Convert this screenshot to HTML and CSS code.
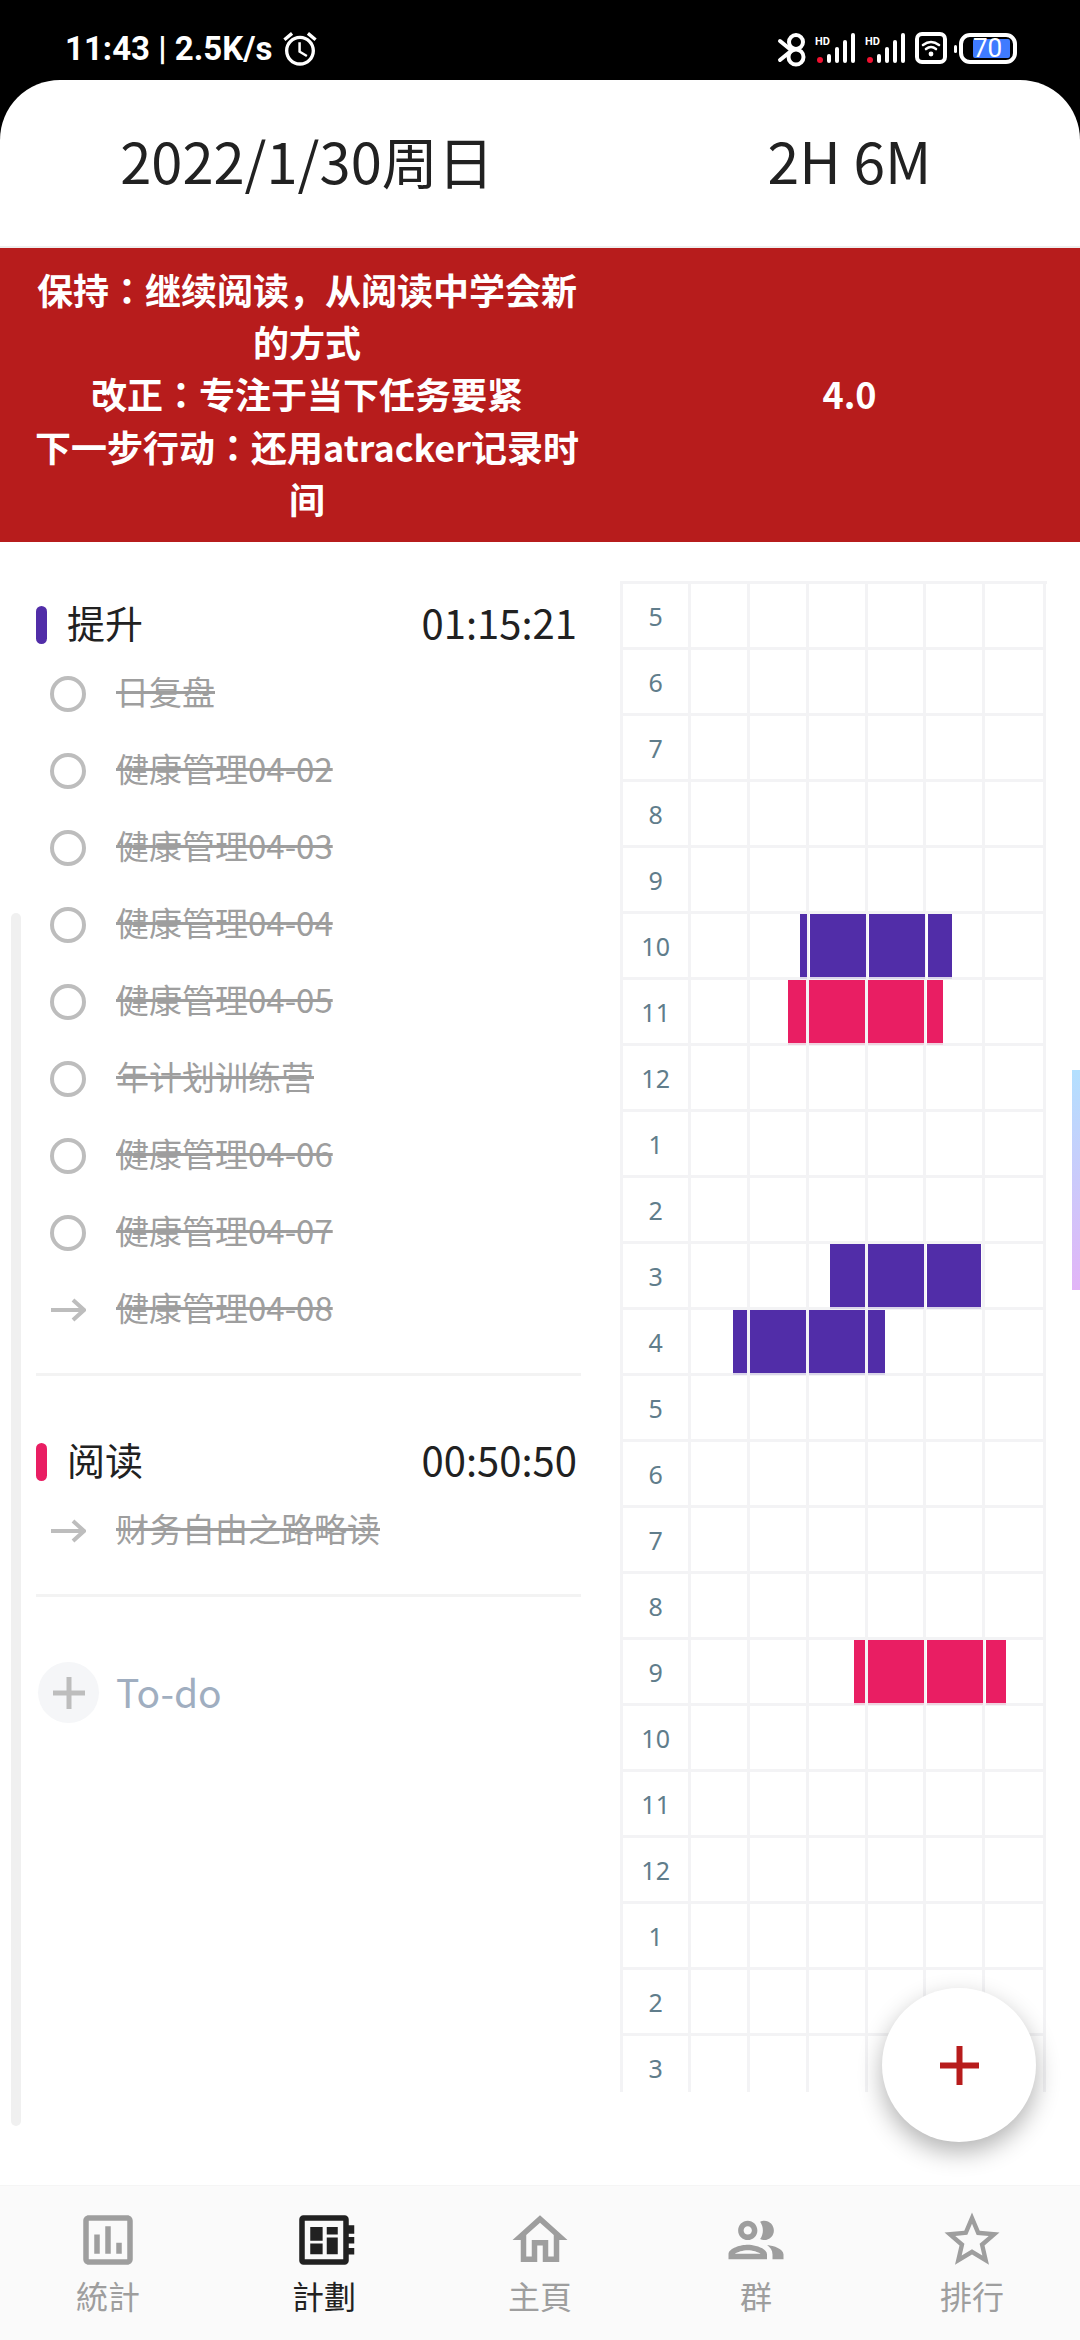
FILE: index.html
```html
<!DOCTYPE html>
<html>
<head>
<meta charset="utf-8">
<title>計劃</title>
<link rel="stylesheet" href="styles.css">
</head>
<body>
<div class="phone">
  <div class="status">
    <div class="status-left">
      <span class="clock">11:43 | 2.5K/s</span>
      <svg class="alarm" viewBox="0 0 24 24"><path d="M22 5.72l-4.6-3.86-1.29 1.53 4.6 3.86L22 5.72zM7.88 3.39L6.6 1.86 2 5.71l1.29 1.53 4.59-3.85zM12.5 8H11v6l4.75 2.85.75-1.23-4-2.37V8zM12 4c-4.97 0-9 4.03-9 9s4.03 9 9 9 9-4.03 9-9-4.03-9-9-9zm0 16c-3.87 0-7-3.13-7-7s3.13-7 7-7 7 3.13 7 7-3.13 7-7 7z"/></svg>
    </div>
    <svg class="status-right" viewBox="0 0 250 40" width="250" height="40">
      <g fill="none" stroke="#fff" stroke-width="4" stroke-linecap="round">
        <path d="M0 8 L11 17 M0 27 L11 18"/>
        <circle cx="16" cy="9" r="7"/>
        <circle cx="16" cy="24" r="7.5"/>
      </g>
      <g class="sig">
        <text class="hd" x="35" y="12">HD</text>
        <circle class="dot" cx="40" cy="27" r="3"/>
        <rect x="47" y="21" width="4" height="9" rx="2"/>
        <rect x="55" y="14" width="4" height="16" rx="2"/>
        <rect x="63" y="7" width="4" height="23" rx="2"/>
        <rect x="71" y="0" width="4" height="30" rx="2"/>
      </g>
      <g class="sig">
        <text class="hd" x="85" y="12">HD</text>
        <circle class="dot" cx="90" cy="27" r="3"/>
        <rect x="97" y="21" width="4" height="9" rx="2"/>
        <rect x="105" y="14" width="4" height="16" rx="2"/>
        <rect x="113" y="7" width="4" height="23" rx="2"/>
        <rect x="121" y="0" width="4" height="30" rx="2"/>
      </g>
      <rect x="137" y="1" width="28" height="28" rx="5" fill="none" stroke="#fff" stroke-width="4"/>
      <path d="M143 12 Q151 6 159 12 M146 16 Q151 12 156 16" fill="none" stroke="#fff" stroke-width="2.6" stroke-linecap="round"/>
      <circle cx="151" cy="21" r="2.4" fill="#fff"/>
      <rect x="174" y="12" width="3" height="8" rx="1.5" fill="#fff"/>
      <rect x="181" y="2" width="54" height="27" rx="9" fill="none" stroke="#fff" stroke-width="4"/>
      <rect x="193" y="6" width="37" height="19" rx="2" fill="#3f7bff"/>
      <text class="batt" x="193" y="24">70</text>
    </svg>
  </div>

  <div class="panel">
    <header class="head">
      <div class="col-left">2022/1/30周日</div>
      <div class="col-right">2H 6M</div>
    </header>

    <section class="banner" lang="ja">
      <div class="col-left">保持：继续阅读，从阅读中学会新的方式<br>改正：专注于当下任务要紧<br>下一步行动：还用atracker记录时间</div>
      <div class="col-right">4.0</div>
    </section>

    <main class="main">
      <div class="todos">
        <section class="group">
          <div class="group-head">
            <span class="mark mark-purple"></span>
            <span class="group-title">提升</span>
            <span class="group-time">01:15:21</span>
          </div>
          <div class="task"><span class="ring"></span><span class="task-name">日复盘</span></div>
          <div class="task"><span class="ring"></span><span class="task-name">健康管理04-02</span></div>
          <div class="task"><span class="ring"></span><span class="task-name">健康管理04-03</span></div>
          <div class="task"><span class="ring"></span><span class="task-name">健康管理04-04</span></div>
          <div class="task"><span class="ring"></span><span class="task-name">健康管理04-05</span></div>
          <div class="task"><span class="ring"></span><span class="task-name">年计划训练营</span></div>
          <div class="task"><span class="ring"></span><span class="task-name">健康管理04-06</span></div>
          <div class="task"><span class="ring"></span><span class="task-name">健康管理04-07</span></div>
          <div class="task"><svg class="arrow" viewBox="0 0 36 24"><path d="M1 12 H34 M23 2 L34 12 L23 22"/></svg><span class="task-name">健康管理04-08</span></div>
        </section>
        <section class="group">
          <div class="group-head">
            <span class="mark mark-pink"></span>
            <span class="group-title">阅读</span>
            <span class="group-time">00:50:50</span>
          </div>
          <div class="task"><svg class="arrow" viewBox="0 0 36 24"><path d="M1 12 H34 M23 2 L34 12 L23 22"/></svg><span class="task-name">财务自由之路略读</span></div>
        </section>
        <div class="add">
          <span class="add-btn"><svg viewBox="0 0 32 32"><path d="M16 0 V32 M0 16 H32"/></svg></span>
          <span class="add-label">To-do</span>
        </div>
      </div>

      <div class="grid">
        <div class="cell hour">5</div><i class="cell"></i><i class="cell"></i><i class="cell"></i><i class="cell"></i><i class="cell"></i><i class="cell"></i>
        <div class="cell hour">6</div><i class="cell"></i><i class="cell"></i><i class="cell"></i><i class="cell"></i><i class="cell"></i><i class="cell"></i>
        <div class="cell hour">7</div><i class="cell"></i><i class="cell"></i><i class="cell"></i><i class="cell"></i><i class="cell"></i><i class="cell"></i>
        <div class="cell hour">8</div><i class="cell"></i><i class="cell"></i><i class="cell"></i><i class="cell"></i><i class="cell"></i><i class="cell"></i>
        <div class="cell hour">9</div><i class="cell"></i><i class="cell"></i><i class="cell"></i><i class="cell"></i><i class="cell"></i><i class="cell"></i>
        <div class="cell hour">10</div><i class="cell"></i><i class="cell"></i><i class="cell"></i><i class="cell"></i><i class="cell"></i><i class="cell"></i>
        <div class="cell hour">11</div><i class="cell"></i><i class="cell"></i><i class="cell"></i><i class="cell"></i><i class="cell"></i><i class="cell"></i>
        <div class="cell hour">12</div><i class="cell"></i><i class="cell"></i><i class="cell"></i><i class="cell"></i><i class="cell"></i><i class="cell"></i>
        <div class="cell hour">1</div><i class="cell"></i><i class="cell"></i><i class="cell"></i><i class="cell"></i><i class="cell"></i><i class="cell"></i>
        <div class="cell hour">2</div><i class="cell"></i><i class="cell"></i><i class="cell"></i><i class="cell"></i><i class="cell"></i><i class="cell"></i>
        <div class="cell hour">3</div><i class="cell"></i><i class="cell"></i><i class="cell"></i><i class="cell"></i><i class="cell"></i><i class="cell"></i>
        <div class="cell hour">4</div><i class="cell"></i><i class="cell"></i><i class="cell"></i><i class="cell"></i><i class="cell"></i><i class="cell"></i>
        <div class="cell hour">5</div><i class="cell"></i><i class="cell"></i><i class="cell"></i><i class="cell"></i><i class="cell"></i><i class="cell"></i>
        <div class="cell hour">6</div><i class="cell"></i><i class="cell"></i><i class="cell"></i><i class="cell"></i><i class="cell"></i><i class="cell"></i>
        <div class="cell hour">7</div><i class="cell"></i><i class="cell"></i><i class="cell"></i><i class="cell"></i><i class="cell"></i><i class="cell"></i>
        <div class="cell hour">8</div><i class="cell"></i><i class="cell"></i><i class="cell"></i><i class="cell"></i><i class="cell"></i><i class="cell"></i>
        <div class="cell hour">9</div><i class="cell"></i><i class="cell"></i><i class="cell"></i><i class="cell"></i><i class="cell"></i><i class="cell"></i>
        <div class="cell hour">10</div><i class="cell"></i><i class="cell"></i><i class="cell"></i><i class="cell"></i><i class="cell"></i><i class="cell"></i>
        <div class="cell hour">11</div><i class="cell"></i><i class="cell"></i><i class="cell"></i><i class="cell"></i><i class="cell"></i><i class="cell"></i>
        <div class="cell hour">12</div><i class="cell"></i><i class="cell"></i><i class="cell"></i><i class="cell"></i><i class="cell"></i><i class="cell"></i>
        <div class="cell hour">1</div><i class="cell"></i><i class="cell"></i><i class="cell"></i><i class="cell"></i><i class="cell"></i><i class="cell"></i>
        <div class="cell hour">2</div><i class="cell"></i><i class="cell"></i><i class="cell"></i><i class="cell"></i><i class="cell"></i><i class="cell"></i>
        <div class="cell hour">3</div><i class="cell"></i><i class="cell"></i><i class="cell"></i><i class="cell"></i><i class="cell"></i><i class="cell"></i>

        <div class="event event-purple" style="left:177px;top:330px"><b style="width:7px"></b><b style="width:56px"></b><b style="width:56px"></b><b style="width:24px"></b></div>
        <div class="event event-pink" style="left:165px;top:396px"><b style="width:18px"></b><b style="width:56px"></b><b style="width:56px"></b><b style="width:16px"></b></div>
        <div class="event event-purple" style="left:207px;top:660px"><b style="width:35px"></b><b style="width:56px"></b><b style="width:54px"></b></div>
        <div class="event event-purple" style="left:110px;top:726px"><b style="width:14px"></b><b style="width:56px"></b><b style="width:56px"></b><b style="width:17px"></b></div>
        <div class="event event-pink" style="left:231px;top:1056px"><b style="width:11px"></b><b style="width:56px"></b><b style="width:56px"></b><b style="width:20px"></b></div>
      </div>
    </main>

    <nav class="nav">
      <div class="tab">
        <svg viewBox="0 0 24 24"><path d="M19 3H5c-1.1 0-2 .9-2 2v14c0 1.1.9 2 2 2h14c1.1 0 2-.9 2-2V5c0-1.1-.9-2-2-2zm0 16H5V5h14v14zM7 10h2v7H7zm4-3h2v10h-2zm4 6h2v4h-2z"/></svg>
        <span>統計</span>
      </div>
      <div class="tab tab-active">
        <svg viewBox="0 0 24 24"><path fill-rule="evenodd" d="M4.5 3h15A1.5 1.5 0 0 1 21 4.5V6.6h2v3.1h-2v1.2h2v2.4h-2v1.6h2v2.4h-2v2.2a1.5 1.5 0 0 1-1.5 1.5h-15A1.5 1.5 0 0 1 3 19.5v-15A1.5 1.5 0 0 1 4.5 3zM5 5v14h14V5z"/><path d="M7 7.25h4.5v5.05H7zM7 13.3h4.5v3.9H7zM13 7.25h4V10h-4zM13 11.1h4v6.1h-4z"/></svg>
        <span>計劃</span>
      </div>
      <div class="tab">
        <svg viewBox="0 0 24 24"><path d="M12 5.69l5 4.5V18h-2v-6H9v6H7v-7.81l5-4.5M12 3L2 12h3v8h6v-6h2v6h6v-8h3L12 3z"/></svg>
        <span>主頁</span>
      </div>
      <div class="tab">
        <svg viewBox="0 0 24 24"><path d="M9 13.75c-2.34 0-7 1.17-7 3.5V19h14v-1.75c0-2.33-4.66-3.5-7-3.5zM4.34 17c.84-.58 2.87-1.25 4.66-1.25s3.82.67 4.66 1.25H4.34zM9 12c1.93 0 3.5-1.57 3.5-3.5S10.93 5 9 5 5.5 6.57 5.5 8.5 7.07 12 9 12zm0-5c.83 0 1.5.67 1.5 1.5S9.83 10 9 10s-1.5-.67-1.5-1.5S8.17 7 9 7zm7.04 6.81c1.16.84 1.96 1.96 1.96 3.44V19h4v-1.75c0-2.02-3.5-3.17-5.96-3.44zM15 12c1.93 0 3.5-1.57 3.5-3.5S16.93 5 15 5c-.54 0-1.04.13-1.5.35.63.89 1 1.98 1 3.15s-.37 2.26-1 3.15c.46.22.96.35 1.5.35z"/></svg>
        <span>群</span>
      </div>
      <div class="tab">
        <svg viewBox="0 0 24 24"><path d="M22 9.24l-7.19-.62L12 2 9.19 8.63 2 9.24l5.46 4.73L5.82 21 12 17.27 18.18 21l-1.63-7.03L22 9.24zM12 15.4l-3.76 2.27 1-4.28-3.32-2.88 4.38-.38L12 6.1l1.71 4.04 4.38.38-3.32 2.88 1 4.28L12 15.4z"/></svg>
        <span>排行</span>
      </div>
    </nav>
  </div>

  <div class="scroll-left"></div>
  <div class="scroll-right"></div>
  <button class="fab" type="button"><svg viewBox="0 0 39 39"><path d="M19.5 0 V39 M0 19.5 H39"/></svg></button>
</div>
</body>
</html>
```
FILE: styles.css
```css
* { box-sizing: border-box; }
html, body { margin: 0; padding: 0; }
body {
  font-family: "Noto Sans CJK SC", "Noto Sans", sans-serif;
  background: #000;
}
.phone {
  position: relative;
  width: 1080px;
  height: 2340px;
  display: flex;
  flex-direction: column;
  background: #000;
  overflow: hidden;
}

/* status bar */
.status {
  flex: 0 0 80px;
  display: flex;
  align-items: center;
  justify-content: space-between;
  padding: 0 50px 0 65px;
  color: #fff;
}
.status-left { display: flex; align-items: center; gap: 8px; height: 100%; padding-top: 18px; }
.clock { font-family: Roboto, sans-serif; font-weight: 700; font-size: 33px; line-height: 40px; white-space: nowrap; }
.alarm { width: 40px; height: 40px; fill: #fff; }
.status-right { display: block; margin-top: 25px; overflow: visible; }
.sig rect { fill: #fff; }
.dot { fill: #f01030; }
.hd { font-family: Roboto, sans-serif; font-weight: 700; font-size: 11px; fill: #fff; }
.batt { font-family: Roboto, sans-serif; font-size: 26px; fill: #fff; }

/* panel */
.panel {
  flex: 1;
  min-height: 0;
  display: flex;
  flex-direction: column;
  background: #fff;
  border-radius: 60px 60px 0 0;
}
.head {
  flex: 0 0 168px;
  display: flex;
  align-items: center;
  border-bottom: 2px solid #eeeeee;
  padding-bottom: 8px;
  font-size: 56px;
  color: #212121;
}
.col-left { flex: 0 0 614px; text-align: center; }
.col-right { flex: 1; text-align: center; padding-left: 5px; }
.head .col-right { font-size: 57px; }
.banner {
  flex: 0 0 294px;
  display: flex;
  align-items: center;
  padding-bottom: 3px;
  background: #b71c1c;
  color: #fff;
  font-family: "Noto Sans CJK JP", "Noto Sans CJK SC", sans-serif;
  font-size: 36px;
  font-weight: 700;
  line-height: 52.3px;
}
.banner .col-left { padding: 0 34px; }

/* main area */
.main {
  flex: 1;
  min-height: 0;
  display: flex;
  align-items: flex-start;
  padding: 39px 0 0 36px;
}
.todos { flex: 0 0 545px; padding-top: 14px; }
.group { padding-bottom: 25px; border-bottom: 3px solid #f3f3f3; margin-bottom: 56px; }
.group:nth-child(2) { margin-bottom: 65px; }
.group-head { height: 60px; display: flex; align-items: center; gap: 20px; padding-right: 4px; }
.mark { width: 11px; height: 38px; border-radius: 6px; }
.mark-purple { background: #512da8; }
.mark-pink { background: #e91e63; }
.group-title { flex: 1; font-size: 38px; color: #212121; line-height: 48px; padding-bottom: 6px; }
.group-time { font-size: 40px; color: #212121; line-height: 48px; padding-bottom: 6px; }
.task { height: 77px; display: flex; align-items: center; padding-left: 14px; gap: 30px; }
.ring { flex: 0 0 36px; height: 36px; border: 4px solid #bdbdbd; border-radius: 50%; }
.arrow { flex: 0 0 36px; width: 36px; height: 24px; fill: none; stroke: #bdbdbd; stroke-width: 4; }
.task-name { font-size: 33px; color: #9e9e9e; text-decoration: line-through; line-height: 44px; white-space: nowrap; padding-bottom: 6px; }
.add { display: flex; align-items: center; gap: 17px; padding-left: 2px; }
.add-btn { width: 61px; height: 61px; border-radius: 50%; background: #f5f6f8; display: flex; align-items: center; justify-content: center; }
.add-btn svg { width: 32px; height: 32px; fill: none; stroke: #bdbdbd; stroke-width: 5; }
.add-label { font-size: 39px; color: #a0aec0; line-height: 50px; padding-bottom: 4px; }

/* time grid */
.grid {
  position: relative;
  flex: 0 0 427px;
  margin-left: 39px;
  height: 1511px;
  overflow: hidden;
  display: grid;
  grid-template-columns: 68.3px repeat(5, 58.8px) 61px;
  grid-auto-rows: 66px;
  border-left: 3px solid #f3f3f5;
  border-top: 3px solid #f3f3f5;
}
.cell { display: block; border-right: 3px solid #f3f3f5; border-bottom: 3px solid #f3f3f5; }
.hour {
  display: flex;
  align-items: center;
  justify-content: center;
  font-family: "Noto Sans", sans-serif;
  font-size: 25px;
  color: #607d8b;
}
.event { position: absolute; display: flex; gap: 3px; height: 63px; }
.event b { display: block; height: 100%; }
.event-purple b { background: #512da8; box-shadow: 0 2px 0 rgba(81,45,168,.15); }
.event-pink b { background: #e91e63; box-shadow: 0 2px 0 rgba(233,30,99,.15); }

/* bottom navigation */
.nav {
  flex: 0 0 155px;
  display: flex;
  padding-top: 21px;
  background: #fafafa;
  border-top: 1px solid #f5f5f5;
}
.tab { flex: 1; display: flex; flex-direction: column; align-items: center; color: #9e9e9e; fill: #9e9e9e; }
.tab svg { width: 66px; height: 66px; display: block; }
.tab span { font-family: "Noto Sans CJK TC", "Noto Sans CJK SC", sans-serif; font-size: 32px; line-height: 44px; }
.tab-active { color: #212121; fill: #212121; }

/* overlays */
.scroll-left { position: absolute; left: 11px; top: 913px; width: 10px; height: 1213px; border-radius: 5px; background: #f0f0f0; }
.scroll-right { position: absolute; right: 0; top: 1070px; width: 8px; height: 220px; background: linear-gradient(#b3e0ff, #e2b4f7); }
.fab {
  position: absolute;
  left: 882px;
  top: 1988px;
  width: 154px;
  height: 154px;
  padding: 0;
  border: 0;
  border-radius: 50%;
  background: #fff;
  box-shadow: 0 10px 24px rgba(0,0,0,.3);
  display: flex;
  align-items: center;
  justify-content: center;
}
.fab svg { width: 39px; height: 39px; fill: none; stroke: #b71c1c; stroke-width: 6; }
```
